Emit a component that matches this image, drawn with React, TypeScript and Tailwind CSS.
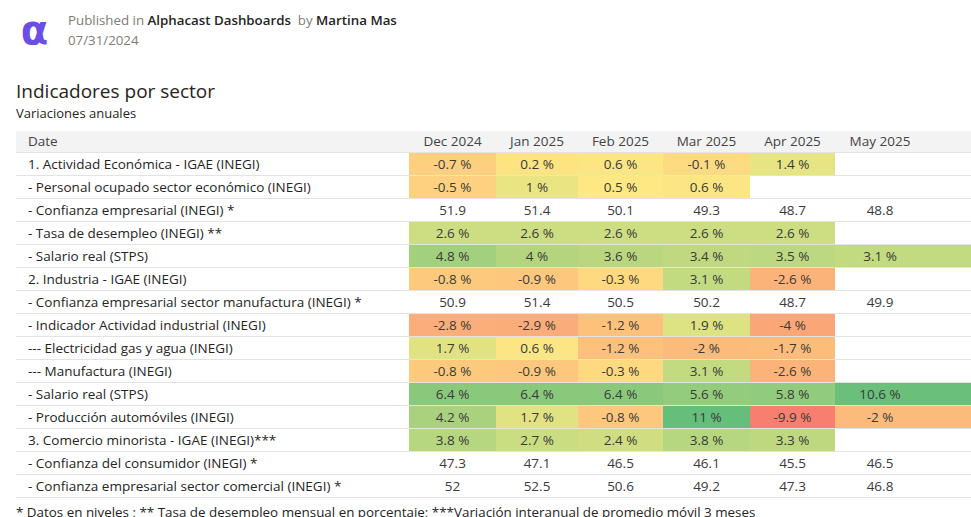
import React from "react";

type Cell = [string, string];

interface Row {
  label: string;
  cells: Cell[];
}

// bg classes written out in full so tailwind picks them up
const rows: Row[] = [
  {
    label: "1. Actividad Económica - IGAE (INEGI)",
    cells: [
      ["-0.7 %", "bg-[#fdcf7e]"],
      ["0.2 %", "bg-[#fee480]"],
      ["0.6 %", "bg-[#fbe683]"],
      ["-0.1 %", "bg-[#fedb80]"],
      ["1.4 %", "bg-[#e6e483]"],
      ["", ""],
    ],
  },
  {
    label: "- Personal ocupado sector económico (INEGI)",
    cells: [
      ["-0.5 %", "bg-[#fdd17f]"],
      ["1 %", "bg-[#eae583]"],
      ["0.5 %", "bg-[#fde883]"],
      ["0.6 %", "bg-[#fbe683]"],
      ["", ""],
      ["", ""],
    ],
  },
  {
    label: "- Confianza empresarial (INEGI) *",
    cells: [
      ["51.9", ""],
      ["51.4", ""],
      ["50.1", ""],
      ["49.3", ""],
      ["48.7", ""],
      ["48.8", ""],
    ],
  },
  {
    label: "- Tasa de desempleo (INEGI) **",
    cells: [
      ["2.6 %", "bg-[#cddd82]"],
      ["2.6 %", "bg-[#cddd82]"],
      ["2.6 %", "bg-[#cddd82]"],
      ["2.6 %", "bg-[#cddd82]"],
      ["2.6 %", "bg-[#cddd82]"],
      ["", ""],
    ],
  },
  {
    label: "- Salario real (STPS)",
    cells: [
      ["4.8 %", "bg-[#a2d07c]"],
      ["4 %", "bg-[#b4d57e]"],
      ["3.6 %", "bg-[#bad780]"],
      ["3.4 %", "bg-[#c0d980]"],
      ["3.5 %", "bg-[#bcd880]"],
      ["3.1 %", "bg-[#c2da80]"],
    ],
  },
  {
    label: "2. Industria - IGAE (INEGI)",
    cells: [
      ["-0.8 %", "bg-[#fdca7d]"],
      ["-0.9 %", "bg-[#fdc87d]"],
      ["-0.3 %", "bg-[#fed980]"],
      ["3.1 %", "bg-[#c2da80]"],
      ["-2.6 %", "bg-[#fbb37a]"],
      ["", ""],
    ],
  },
  {
    label: "- Confianza empresarial sector manufactura (INEGI) *",
    cells: [
      ["50.9", ""],
      ["51.4", ""],
      ["50.5", ""],
      ["50.2", ""],
      ["48.7", ""],
      ["49.9", ""],
    ],
  },
  {
    label: "- Indicador Actividad industrial (INEGI)",
    cells: [
      ["-2.8 %", "bg-[#fbae79]"],
      ["-2.9 %", "bg-[#fbad79]"],
      ["-1.2 %", "bg-[#fdc17c]"],
      ["1.9 %", "bg-[#dde282]"],
      ["-4 %", "bg-[#faa677]"],
      ["", ""],
    ],
  },
  {
    label: "--- Electricidad gas y agua (INEGI)",
    cells: [
      ["1.7 %", "bg-[#e1e383]"],
      ["0.6 %", "bg-[#fbe683]"],
      ["-1.2 %", "bg-[#fdc17c]"],
      ["-2 %", "bg-[#fcba7b]"],
      ["-1.7 %", "bg-[#fcbd7b]"],
      ["", ""],
    ],
  },
  {
    label: "--- Manufactura (INEGI)",
    cells: [
      ["-0.8 %", "bg-[#fdca7d]"],
      ["-0.9 %", "bg-[#fdc87d]"],
      ["-0.3 %", "bg-[#fed980]"],
      ["3.1 %", "bg-[#c2da80]"],
      ["-2.6 %", "bg-[#fbb37a]"],
      ["", ""],
    ],
  },
  {
    label: "- Salario real (STPS)",
    cells: [
      ["6.4 %", "bg-[#8ac97c]"],
      ["6.4 %", "bg-[#8ac97c]"],
      ["6.4 %", "bg-[#8ac97c]"],
      ["5.6 %", "bg-[#94cc7d]"],
      ["5.8 %", "bg-[#91cb7d]"],
      ["10.6 %", "bg-[#6abf7b]"],
    ],
  },
  {
    label: "- Producción automóviles (INEGI)",
    cells: [
      ["4.2 %", "bg-[#aad27e]"],
      ["1.7 %", "bg-[#e1e383]"],
      ["-0.8 %", "bg-[#fdc87d]"],
      ["11 %", "bg-[#66be7b]"],
      ["-9.9 %", "bg-[#f87f6f]"],
      ["-2 %", "bg-[#fcba7b]"],
    ],
  },
  {
    label: "3. Comercio minorista - IGAE (INEGI)***",
    cells: [
      ["3.8 %", "bg-[#b6d67f]"],
      ["2.7 %", "bg-[#cbdd81]"],
      ["2.4 %", "bg-[#d0de81]"],
      ["3.8 %", "bg-[#b6d67f]"],
      ["3.3 %", "bg-[#bed880]"],
      ["", ""],
    ],
  },
  {
    label: "- Confianza del consumidor (INEGI) *",
    cells: [
      ["47.3", ""],
      ["47.1", ""],
      ["46.5", ""],
      ["46.1", ""],
      ["45.5", ""],
      ["46.5", ""],
    ],
  },
  {
    label: "- Confianza empresarial sector comercial (INEGI) *",
    cells: [
      ["52", ""],
      ["52.5", ""],
      ["50.6", ""],
      ["49.2", ""],
      ["47.3", ""],
      ["46.8", ""],
    ],
  },
];

const months = ["Dec 2024", "Jan 2025", "Feb 2025", "Mar 2025", "Apr 2025", "May 2025"];

const cols = "grid grid-cols-[393px_87px_82px_85px_87px_85px_136px]";

export default function App() {
  return (
    <div className="h-[517px] w-[971px] overflow-hidden bg-white font-['Open_Sans','Noto_Sans',sans-serif] text-[#252423]">
      <div className="flex items-start gap-[17px] pl-[18px] pt-[8px]">
        <div className="flex h-[44px] w-[33px] items-center justify-center font-['DejaVu_Sans',sans-serif] text-[40px] font-bold leading-none text-[#6b4ee6]">
          α
        </div>
        <div className="pt-[2px] text-[13.3px] leading-[20px]">
          <div>
            <span className="text-[#807c78]">Published in </span>
            <span className="font-semibold">Alphacast Dashboards</span>
            <span className="text-[#807c78]">&nbsp; by </span>
            <span className="font-semibold">Martina Mas</span>
          </div>
          <div className="text-[#807c78]">07/31/2024</div>
        </div>
      </div>

      <div className="mt-[26px] pl-[16px]">
        <h1 className="text-[19px] leading-[26px] text-[#252423]">Indicadores por sector</h1>
        <p className="text-[13px] leading-[18px] text-[#252423]">Variaciones anuales</p>
      </div>

      <div className="mt-[9px] ml-[16px] text-[13.5px] text-[#3a3a3a]">
        <div className={`${cols} h-[21px] items-center bg-[#f3f3f3] font-medium text-[#444]`}>
          <div className="pl-[12px] font-normal">Date</div>
          {months.map((m, i) => (
            <div key={m} className={i === 5 ? "pr-[46px] text-center" : "text-center"}>
              {m}
            </div>
          ))}
        </div>
        {rows.map((r, ri) => (
          <div key={ri} className={`${cols} h-[23px] border-t border-[#e3e3e3]`}>
            <div className="flex items-center pl-[12px] text-[#252423]">{r.label}</div>
            {r.cells.map(([v, bg], ci) => (
              <div
                key={ci}
                className={`flex items-center justify-center ${bg} ${ci === 5 ? "pr-[46px]" : ""}`}
              >
                {v}
              </div>
            ))}
          </div>
        ))}
        <div className="border-t border-[#e3e3e3]" />
      </div>

      <p className="mt-[4px] pl-[16px] text-[13.4px] leading-[20px] text-[#252423]">
        * Datos en niveles ; ** Tasa de desempleo mensual en porcentaje; ***Variación interanual de promedio móvil 3 meses
      </p>
    </div>
  );
}
